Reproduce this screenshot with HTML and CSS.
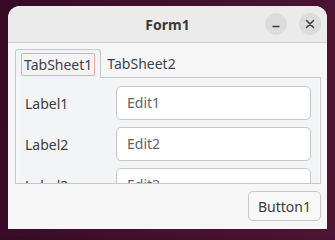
FILE: index.html
```html
<!DOCTYPE html>
<html>
<head>
<meta charset="utf-8">
<link rel="stylesheet" href="styles.css">
</head>
<body>
<div class="window">
  <div class="titlebar">
    <span></span>
    <span class="title">Form1</span>
    <div class="controls">
      <span class="wbtn"><svg width="22" height="22" viewBox="0 0 22 22"><line x1="7.5" y1="13.5" x2="14.5" y2="13.5" stroke="#3a3a3a" stroke-width="1.4"/></svg></span>
      <span class="wbtn"><svg width="22" height="22" viewBox="0 0 22 22"><path d="M7.5 7.5 L14.5 14.5 M14.5 7.5 L7.5 14.5" stroke="#3a3a3a" stroke-width="1.5" stroke-linecap="round"/></svg></span>
    </div>
  </div>
  <div class="client">
    <div class="tabs">
      <div class="tabstrip">
        <div class="tab active"><span class="focus">TabSheet1</span></div>
        <div class="tab">TabSheet2</div>
      </div>
      <div class="frame">
        <div class="page">
          <div class="row"><span class="label">Label1</span><div class="edit">Edit1</div></div>
          <div class="row"><span class="label">Label2</span><div class="edit">Edit2</div></div>
          <div class="row"><span class="label">Label3</span><div class="edit">Edit3</div></div>
        </div>
      </div>
    </div>
    <div class="footer"><button class="button">Button1</button></div>
  </div>
</div>
</body>
</html>
```

FILE: styles.css
```css
html, body {
  margin: 0;
  padding: 0;
}
body {
  width: 335px;
  height: 236px;
  overflow: hidden;
  background: linear-gradient(100deg, #360b26 0%, #43102e 50%, #4e1433 100%);
  font-family: "Noto Sans", "Open Sans", sans-serif;
  font-size: 14px;
  color: #3c3c3c;
}
.window {
  margin: 6px 0 0 8px;
  width: 319px;
  height: 223px;
  border-radius: 12px 12px 0 0;
  overflow: hidden;
  background: #f6f6f7;
  display: flex;
  flex-direction: column;
}
.titlebar {
  height: 36px;
  flex: none;
  background: #ebebeb;
  border-bottom: 1px solid #cdcdcd;
  display: grid;
  grid-template-columns: 1fr auto 1fr;
  align-items: center;
}
.title {
  font-weight: bold;
  font-size: 14px;
  color: #3a3a3a;
  padding-top: 1px;
}
.controls {
  justify-self: end;
  display: flex;
  gap: 12px;
  padding-right: 6px;
}
.wbtn {
  width: 22px;
  height: 22px;
  border-radius: 50%;
  background: #dcdcdc;
  display: flex;
}
.client {
  flex: 1;
  display: flex;
  flex-direction: column;
  padding: 6px 6px 8px 7px;
}
.tabs {
  display: flex;
  flex-direction: column;
}
.tabstrip {
  display: flex;
  height: 28px;
  align-items: flex-end;
}
.tab {
  line-height: 21px;
  padding: 3px 5px 3px 6px;
  color: #3c4350;
}
.tab.active {
  position: relative;
  z-index: 1;
  margin-bottom: -1px;
  height: 29px;
  box-sizing: border-box;
  padding: 3px 5px 2px 5px;
  border: 1px solid #c6c8cc;
  border-bottom: none;
  border-radius: 3px 3px 0 0;
  background: #f3f4f5;
}
.focus {
  display: block;
  border: 1px solid #f2a890;
  border-radius: 2px;
  padding: 0 2px 0 2px;
  line-height: 21px;
}
.frame {
  height: 107px;
  box-sizing: border-box;
  width: 306px;
  border: 1px solid #c6c8cc;
  padding: 0 1px 0 3px;
  background: #f8f8f9;
  overflow: hidden;
}
.page {
  height: 100%;
  background: #f3f4f5;
  padding: 8px 8px 0 6px;
  display: flex;
  flex-direction: column;
  gap: 7px;
  overflow: hidden;
}
.row {
  display: flex;
  align-items: center;
  flex: none;
}
.label {
  width: 91px;
  color: #403c3c;
}
.edit {
  width: 195px;
  height: 34px;
  box-sizing: border-box;
  border: 1px solid #c6c8cc;
  border-radius: 5px;
  background: #ffffff;
  padding-left: 10px;
  line-height: 32px;
  color: #5d6470;
}
.footer {
  margin-top: auto;
  display: flex;
  justify-content: flex-end;
  padding-right: 0;
}
.button {
  width: 73px;
  height: 30px;
  border: 1px solid #c8c8c8;
  border-radius: 5px;
  background: #f8f8f8;
  font-family: "Noto Sans", "Open Sans", sans-serif;
  font-size: 14px;
  color: #3c3c3c;
  padding: 0;
}
```
